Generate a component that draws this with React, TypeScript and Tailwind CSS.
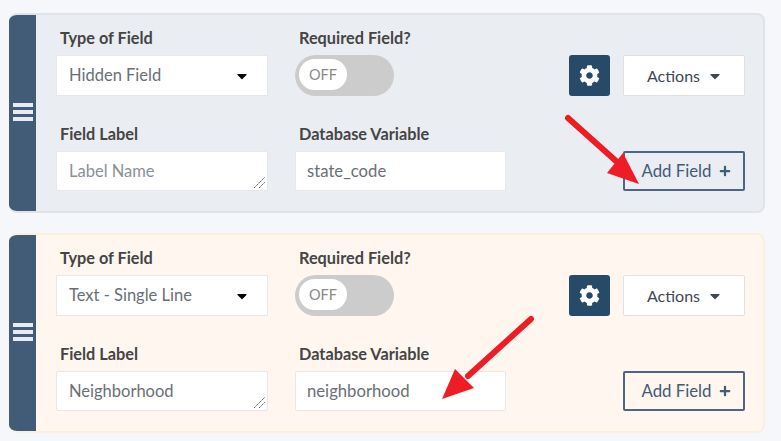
import { FaCaretDown, FaCog, FaPlus } from "react-icons/fa";

function Label({ text }: { text: string }) {
  return <div className="pl-1 mb-[7px] h-[20px] text-[16.3px] leading-[20px] font-bold text-[#454545]">{text}</div>;
}

function FieldCard({ type, label, dbVar, warm, arrow }: any) {
  const border = warm ? "border-[#e8e8e8]" : "border-[#e6e8ec]";
  return (
    <div
      className={`relative flex h-[200px] rounded-[8px] overflow-hidden border-t-2 border-r-2 border-b-2 ${
        warm ? "bg-[#fef6ef] border-[#fbf0e0]" : "bg-[#eaedf2] border-[#e0e3e8]"
      }`}
    >
      <div className="w-[27px] -my-[2px] shrink-0 bg-[#425b76] flex flex-col gap-[3px] items-center justify-center pb-[2px]">
        <div className="h-[4px] w-[20px] bg-[#e8ecf2]" />
        <div className="h-[4px] w-[20px] bg-[#e8ecf2]" />
        <div className="h-[4px] w-[20px] bg-[#e8ecf2]" />
      </div>
      <div className="flex flex-col gap-[28px] pt-[13px] pl-[20px]">
        <div className="flex">
          <div className="w-[212px]">
            <Label text="Type of Field" />
            <div className={`h-[41px] w-[212px] bg-white border ${border} flex items-center justify-between pl-[12px] pr-[17px] text-[16.5px] text-[#6a6f76]`}>
              {type}
              <FaCaretDown size={16} className="text-black" />
            </div>
          </div>
          <div className="w-[211px] ml-[27px]">
            <Label text="Required Field?" />
            <div className="h-[41px] w-[99px] rounded-full bg-[#cccccc] p-[4px]">
              <div className="h-[31px] w-[48px] rounded-full bg-white flex items-center justify-center text-[14.5px] text-[#8a8a8a]">OFF</div>
            </div>
          </div>
          <div className="flex gap-[13px] ml-[63px] pt-[27px]">
            <div className="h-[41px] w-[41px] rounded-[3px] bg-[#264a67] flex items-center justify-center text-white">
              <FaCog size={21} />
            </div>
            <button className="h-[41px] w-[122px] rounded-[2px] bg-white border border-[#e0e0e0] flex items-center justify-center gap-[7px] pl-[2px] text-[16px] text-[#3f4750]">
              Actions
              <FaCaretDown size={16} className="text-[#3f4750]" />
            </button>
          </div>
        </div>
        <div className="flex">
          <div className="relative w-[212px]">
            <Label text="Field Label" />
            <textarea
              readOnly
              placeholder="Label Name"
              defaultValue={label}
              className={`block h-[40px] w-[212px] resize-none bg-white border ${border} rounded-[2px] pl-[12px] pt-[9px] text-[16.5px] leading-[20px] text-[#6a6f76] placeholder:text-[#8b9096] outline-none`}
            />
            {/* resize grip */}
            <svg className="absolute right-[2px] bottom-[2px]" width="13" height="13">
              <path d="M1 12 L12 1 M6 12 L12 6" stroke="#555" strokeWidth="1" strokeDasharray="1.5 0.7" />
            </svg>
          </div>
          <div className="w-[211px] ml-[27px]">
            <Label text="Database Variable" />
            <input
              readOnly
              defaultValue={dbVar}
              className={`block h-[40px] w-[211px] bg-white border ${border} rounded-[2px] pl-[11px] text-[16.7px] text-[#6a6f76] outline-none`}
            />
          </div>
          <div className="ml-[117px] pt-[27px]">
            <button className="h-[40px] w-[122px] rounded-[2px] border-2 border-[#4d6582] flex items-center justify-center gap-[8px] pl-[5px] text-[16.8px] text-[#425b76]">
              Add Field
              <FaPlus size={12} />
            </button>
          </div>
        </div>
      </div>
      {arrow}
    </div>
  );
}

export default function App() {
  return (
    <div className="w-[781px] h-[441px] overflow-hidden bg-[#f5f7fb] pt-[13px] pl-[9px] pr-[16px] flex flex-col gap-[20px] font-['Lato',sans-serif]">
      <FieldCard
        type="Hidden Field"
        dbVar="state_code"
        arrow={
          <svg className="absolute left-0 top-0" width="756" height="200">
            <path d="M559 103 L607 146" stroke="#ee1c25" strokeWidth="6" strokeLinecap="round" />
            <path d="M630 169 L614 138 L598 158 Z" fill="#ee1c25" />
          </svg>
        }
      />
      <FieldCard
        type="Text - Single Line"
        label="Neighborhood"
        dbVar="neighborhood"
        warm
        arrow={
          <svg className="absolute left-0 top-0" width="756" height="200">
            <path d="M522 84 L459 141" stroke="#ee1c25" strokeWidth="6" strokeLinecap="round" />
            <path d="M433 164 L446 134 L465 153 Z" fill="#ee1c25" />
          </svg>
        }
      />
    </div>
  );
}
